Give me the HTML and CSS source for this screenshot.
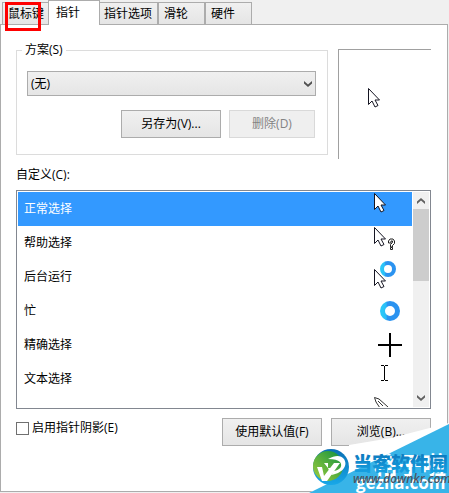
FILE: index.html
```html
<!DOCTYPE html>
<html lang="zh-CN">
<head>
<meta charset="utf-8">
<title>鼠标 属性</title>
<link rel="stylesheet" href="styles.css">
</head>
<body>
<svg class="defs" aria-hidden="true">
  <defs>
    <path id="arrow" d="M.5.5v16l3.500-3.500 3 6 3-1.500-3-5.500h4.500z" stroke="#151522" stroke-width="1"/>
    <linearGradient id="ring" x1="0" x2="1" y1="0" y2="0">
      <stop offset="0" stop-color="#2bc8f8"/><stop offset=".25" stop-color="#2bbcf8"/><stop offset=".3" stop-color="#2b93f0"/><stop offset="1" stop-color="#2b93f0"/>
    </linearGradient>
    <linearGradient id="green" x1="0" x2="1" y1="1" y2="0"><stop offset="0" stop-color="#a4cf3c"/><stop offset="1" stop-color="#0d8f3f"/></linearGradient>
    <linearGradient id="blue" x1="0" x2="0" y1="0" y2="1"><stop offset="0" stop-color="#0a6fb4"/><stop offset="1" stop-color="#18a8e8"/></linearGradient>
  </defs>
</svg>
<main class="dialog">
  <nav class="tabs" role="tablist">
    <button class="tab first" role="tab">鼠标键</button>
    <button class="tab active" role="tab" aria-selected="true">指针</button>
    <button class="tab options" role="tab">指针选项</button>
    <button class="tab" role="tab">滑轮</button>
    <button class="tab" role="tab">硬件</button>
  </nav>
  <section class="panel">
    <div class="top">
      <fieldset class="scheme">
        <legend><label for="scheme">方案(S)</label></legend>
        <div class="select-box">
          <select id="scheme"><option>(无)</option></select>
          <svg class="chevron" width="8" height="6" viewBox="0 0 8 6"><path d="M0 0 4 3.500 8 0v2.500L4 6 0 2.500z" fill="#505050"/></svg>
        </div>
        <div class="scheme-actions">
          <button class="btn">另存为(V)...</button>
          <button class="btn" disabled>删除(D)</button>
        </div>
      </fieldset>
      <div class="preview"><svg width="12" height="20"><use href="#arrow" fill="#fff"/></svg></div>
    </div>
    <div class="caption" id="custom">自定义(C):</div>
    <div class="listbox">
      <ul class="list" role="listbox" aria-labelledby="custom">
        <li class="selected" role="option" aria-selected="true">正常选择<svg width="44" height="34"><use href="#arrow" x="6" y="1" fill="#fff"/></svg></li>
        <li role="option">帮助选择<svg width="44" height="34"><use href="#arrow" x="6" y="1" fill="#fff"/><path d="M20.500 17v-2l1.500-2h3l1.500 2v2.500l-2 2v1.500h-2V18.500l2-2V15h-1.500v2zM22.500 21.500h2v2h-2z" fill="#fff" stroke="#222" stroke-width="1"/></svg></li>
        <li role="option">后台运行<svg width="44" height="34"><circle cx="20" cy="9" r="6" fill="#fff" stroke="url(#ring)" stroke-width="4"/><use href="#arrow" x="6" y="9" fill="#fff"/></svg></li>
        <li role="option">忙<svg width="44" height="34"><circle cx="22" cy="17" r="7.500" fill="#fff" stroke="url(#ring)" stroke-width="5"/></svg></li>
        <li role="option">精确选择<svg width="44" height="34"><path d="M10 17h24M22 5v24" stroke="#000" stroke-width="2"/></svg></li>
        <li role="option">文本选择<svg width="44" height="34"><path d="M13 3.500h3m1 0h3M13 18.500h3m1 0h3M16.500 4v14" fill="none" stroke="#000"/></svg></li>
        <li class="handwriting" role="option" aria-label="手写"><svg width="44" height="34"><path d="M12 12 8 6 6.500 1.500 11 3l9 8M10 5l5 5" fill="#fff" stroke="#333" stroke-width="1"/></svg></li>
      </ul>
      <div class="scrollbar" aria-hidden="true">
        <svg width="8" height="6" viewBox="0 0 8 6"><path d="M0 6 4 2.500 8 6V3.500L4 0 0 3.500z" fill="#606060"/></svg>
        <div class="track"><div class="thumb"></div></div>
        <svg width="8" height="6" viewBox="0 0 8 6"><path d="M0 0 4 3.500 8 0v2.500L4 6 0 2.500z" fill="#606060"/></svg>
      </div>
    </div>
    <div class="bottom">
      <label class="check"><input type="checkbox">启用指针阴影(E)</label>
      <div class="bottom-actions">
        <button class="btn">使用默认值(F)</button>
        <button class="btn">浏览(B)...</button>
      </div>
    </div>
  </section>
  <div class="highlight"></div>
  <svg class="watermark" width="140" height="70" viewBox="0 0 140 70" role="img" aria-label="当客软件园">
    <path d="M40 22 82 15 140 0v70H0l40-20z" fill="#fff"/>
    <path d="M0 70 140 1v69z" fill="#38b4e8"/>
    <text class="site-cn" x="65" y="51">格子啦</text>
    <text class="site" x="47" y="66">gezila.com</text>
    <circle cx="22" cy="44" r="18" fill="url(#blue)"/>
    <circle cx="19" cy="43" r="15" fill="url(#green)"/>
    <path d="M8 44h5l2 9 10-13h6L18 58h-5z" fill="#fff"/>
    <path d="M15 40h4v5zM19 36q11-6 16 0c5 8-4 15-13 16l3-4c6-1 9-5 6-9q-3-3-12-3z" fill="#fff"/>
    <path d="M19 45h4l2 5h-4z" fill="#fff"/>
    <text class="brand" x="44" y="48" fill="url(#blue)">当客软件园</text>
    <text class="url" x="44" y="60">www.downkr.com</text>
  </svg>
</main>
</body>
</html>
```
FILE: styles.css
```css
* { box-sizing: border-box; }
body { margin: 0; background: #f0f0f0; color: #000; font: 12px/16px "Open Sans", "Noto Sans CJK SC", sans-serif; }
button, select, input { font: inherit; color: inherit; margin: 0; }
.defs { position: absolute; width: 0; height: 0; }
.dialog { position: relative; min-height: 100vh; padding-right: 1px; display: flex; flex-direction: column; overflow: hidden; }
.tabs { display: flex; align-items: flex-end; height: 25px; padding-left: 2px; margin-bottom: -1px; position: relative; }
.tab { height: 23px; padding: 0 5px; border: 1px solid #acacac; background: linear-gradient(#f0f0f0, #e5e5e5); min-width: 47px; text-align: left; white-space: nowrap; }
.tab.first { border-right: 0; min-width: 46px; }
.tab.active { height: 25px; min-width: 52px; padding: 0 7px; background: #fff; border-bottom: 0; }
.tab.options { padding: 0 5px 0 4px; border-left: 0; }
.tab.first { width: 46px; }
.panel { flex: 1; border: 1px solid #acacac; background: #fff; padding: 17px 16px 0 15px; margin-bottom: 1px; }
.top { display: flex; gap: 10px; }
.scheme { flex: 1; min-width: 0; height: 113px; margin: 0; padding: 13px 11px 0 10px; border: 1px solid #dcdcdc; }
.scheme legend { padding: 0 3px; margin-left: -5px; }
.select-box { position: relative; }
.select-box select { display: block; width: 100%; height: 25px; padding: 0 3px; border: 1px solid #acacac; border-radius: 0; background: linear-gradient(#f0f0f0, #e5e5e5); appearance: none; }
.chevron { position: absolute; right: 4px; top: 10px; pointer-events: none; }
.scheme-actions { display: flex; justify-content: flex-end; gap: 8px; margin-top: 14px; padding-right: 1px; }
.btn { height: 28px; width: 100px; padding: 0; border: 1px solid #acacac; background: linear-gradient(#f0f0f0, #e5e5e5); white-space: nowrap; }
.btn:disabled { width: 86px; color: #838383; border-color: #d9d9d9; background: #efefef; }
.preview { width: 93px; height: 110px; margin-top: 7px; border: solid #a0a0a0; border-width: 1px 0 0 1px; padding: 38px 0 0 29px; }
.caption { margin: 8px 0 7px; }
.listbox { display: flex; height: 219px; border: 1px solid #828790; padding: 1px; }
.list { flex: 1; min-width: 0; margin: 0 1px 0 0; padding: 0; list-style: none; overflow: hidden; }
.list li { display: flex; align-items: center; justify-content: space-between; height: 34px; padding-left: 6px; }
.list .selected { background: #3399ff; color: #fff; }
.list .handwriting { justify-content: flex-end; }
.scrollbar { width: 16px; background: #f0f0f0; display: flex; flex-direction: column; align-items: center; padding: 6px 0; gap: 5px; }
.track { flex: 1; width: 100%; }
.thumb { height: 72px; background: #cdcdcd; }
.bottom { display: flex; justify-content: space-between; padding-top: 9px; }
.check { display: flex; align-items: center; gap: 3px; height: 20px; }
.check input { appearance: none; width: 13px; height: 13px; border: 1px solid #707070; background: #fff; }
.bottom-actions { display: flex; gap: 9px; }
.highlight { position: absolute; left: 5px; top: 2px; width: 36px; height: 29px; border: 3px solid #f00; }
.watermark { position: absolute; right: 0; bottom: 0; }
.site-cn { font: 700 24px "Noto Sans CJK SC", sans-serif; fill: #fff; }
.site { font: 700 17px "Open Sans", sans-serif; fill: #fff; }
.brand { font: 900 19px "Noto Sans CJK SC", sans-serif; }
.url { font: italic 600 12px "Open Sans", sans-serif; fill: #4b5563; }
```
